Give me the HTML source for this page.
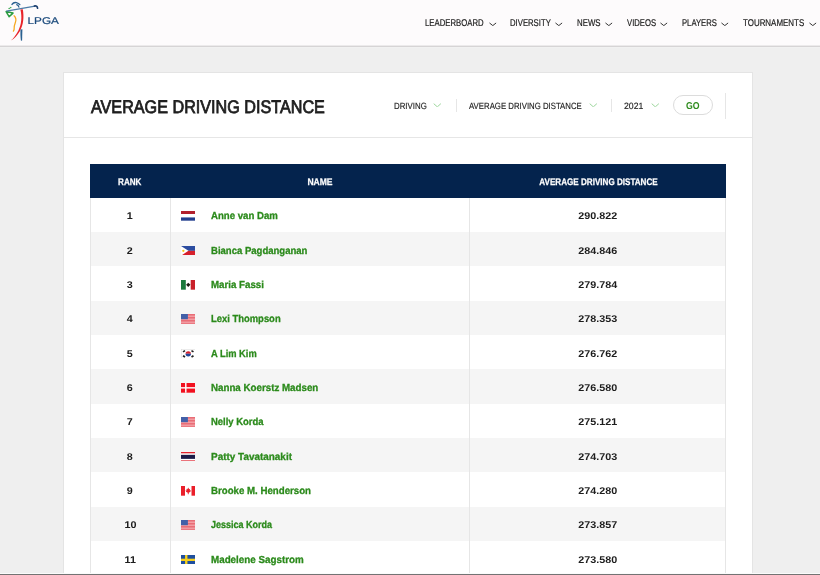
<!DOCTYPE html>
<html lang="en">
<head>
<meta charset="utf-8">
<title>Average Driving Distance | LPGA</title>
<style>
*{box-sizing:border-box;margin:0;padding:0}
html,body{width:820px;height:575px;overflow:hidden;background:#efefef;font-family:"Liberation Sans",sans-serif;color:#1d1d1d;text-rendering:geometricPrecision}
body{position:relative;will-change:transform}
.sx{display:inline-block;white-space:nowrap;transform-origin:0 50%;transform:scaleX(var(--s,1))}
/* header */
header{position:absolute;left:0;top:0;width:820px;height:47px;background:#fdfbfc;border-bottom:1px solid #d6d4d5;box-shadow:inset 0 -1px 0 #eceaeb,0 1px 0 #f1f1f1}
.logo{position:absolute;left:0;top:0;width:70px;height:48px}
nav a{position:absolute;top:18.3px;height:12px;line-height:12px;font-size:9.8px;color:#1c1c1c;-webkit-text-stroke:.2px #1c1c1c;text-decoration:none;white-space:nowrap}
nav svg{position:absolute;top:3.3px;width:7.6px;height:4.75px}
/* card */
.card{position:absolute;left:64px;top:73px;width:688px;height:520px;background:#fff;box-shadow:0 0 0 1px #e4e4e4}
.card h1{position:absolute;left:27px;top:22px;font-size:18.2px;line-height:24px;font-weight:400;color:#1f1f1f;-webkit-text-stroke:.8px #1f1f1f}
.hr{position:absolute;left:0;top:64px;width:688px;height:1px;background:#e6e6e6}
.filter{position:absolute;top:26.7px;height:12px;line-height:12px;font-size:9.1px;color:#1e1e1e;-webkit-text-stroke:.15px #1e1e1e;white-space:nowrap}
.filter svg{position:absolute;top:3.2px;width:8.6px;height:4.6px}
.vsep{position:absolute;width:1px;background:#e6e6e6}
.go{position:absolute;left:608.7px;top:21.6px;width:40px;height:20px;border:1px solid #dcdcdc;border-radius:10px;background:#fff;color:#2f8c1e;font:700 10px/21.4px "Liberation Sans",sans-serif;text-align:center}
.edge{position:absolute;left:0;top:573px;width:820px;height:2px;background:linear-gradient(#fbfbfb 0,#fbfbfb 50%,#737373 50%,#737373 100%)}
/* table */
.tbl{position:absolute;left:26px;top:91px;width:636px}
.th{position:relative;height:33.6px;background:#04234d;color:#fff;font-size:9.5px;font-weight:700}
.row{position:relative;height:34.33px;background:#fff;box-shadow:inset 1px 0 #e6e6e6,inset -1px 0 #e6e6e6}
.row:nth-child(odd){background:#f5f5f5}
.c{position:absolute;top:0;height:100%;display:flex;align-items:center;justify-content:center}
.c .sx{transform-origin:50% 50%}
.c1{left:0;width:80px}
.c2{left:80px;width:300px}
.c3{left:380px;width:256px}
.th .c{padding-top:3.2px;-webkit-text-stroke:.25px #fff}
.row .c2{justify-content:flex-start;border-left:1px solid #e6e6e6;border-right:1px solid #e6e6e6}
.row .c1,.row .c3{font-size:9.8px;font-weight:700;color:#1d1d1d;padding-top:5.4px;line-height:12px}
.row .c1 .sx,.row .c3 .sx{--s:1.1}
.row .c2 a{-webkit-text-stroke:.3px #2b8a1b;position:absolute;left:40.3px;margin-top:5px;line-height:12px;color:#2b8a1b;font-size:10.2px;font-weight:700;text-decoration:none}
.row .c2 a .sx{--s:.95;transform-origin:0 50%}
.flag{position:absolute;left:9.6px;top:50%;margin-top:-3.5px;width:14.5px;height:9.7px}
</style>
</head>
<body>
<header>
  <svg class="logo" viewBox="0 0 70 48">
    <path d="M12 4.4C13 2.9 14.8 2.2 16.4 2.6C17.9 3 19.1 3.7 19.8 4.6" fill="none" stroke="#2b6190" stroke-width="1.4" stroke-linecap="round"/>
    <path d="M16.7 4.6C17.8 5 18.6 5.9 18.9 7.1" fill="none" stroke="#2b6190" stroke-width="1.2" stroke-linecap="round"/>
    <path d="M8.6 8.8L11.3 7.3" fill="none" stroke="#2ea043" stroke-width="1.3" stroke-dasharray="1.3 .6"/>
    <path d="M6.1 11.6L13 13.1L9.1 16.7Z" fill="none" stroke="#2a9d3f" stroke-width="1.5" stroke-linejoin="round"/>
    <path d="M6.4 11.1L35 6.1" fill="none" stroke="#4d7ba6" stroke-width="1.15"/>
    <path d="M34.4 6.1C36 5.4 37.4 6.5 37.6 8.3" fill="none" stroke="#1d3f6e" stroke-width="1.6" stroke-linecap="round"/>
    <path d="M20.4 9.5L22.8 9.3C24.2 17 23.4 25 20 31C17.4 35.5 14.4 38.6 10.8 40.6C13.6 38 16.2 34.8 18.4 30.4C21.4 24.4 22.2 17 20.4 9.5Z" fill="#e8242a"/>
    <path d="M14.1 15.8C15.8 17.6 16.4 19.6 15.5 22C14.6 24.5 14 26 14.2 28C14.3 29.5 14 30.4 13.4 31.2" fill="none" stroke="#f6a81f" stroke-width="1.25" stroke-linecap="round"/>
    <path d="M20.5 29.6L22.4 29.3L22.1 40.8L20.9 40.6C20.4 37 20.3 33 20.5 29.6Z" fill="#2b6190"/>
    <text x="27.5" y="23.6" font-family="Liberation Sans, sans-serif" font-size="9.8" fill="#1b4a7c" stroke="#1b4a7c" stroke-width=".2" textLength="31.4" lengthAdjust="spacingAndGlyphs">LPGA</text>
  </svg>
  <nav>
    <a href="#" style="left:424.5px"><span class="sx" style="--s:0.792">LEADERBOARD</span><svg viewBox="0 0 8 5" style="left:64.5px"><path d="M.5 1L4 3.8L7.5 1" fill="none" stroke="#2a2a2a" stroke-width="1"/></svg></a>
    <a href="#" style="left:510px"><span class="sx" style="--s:0.789">DIVERSITY</span><svg viewBox="0 0 8 5" style="left:45.0px"><path d="M.5 1L4 3.8L7.5 1" fill="none" stroke="#2a2a2a" stroke-width="1"/></svg></a>
    <a href="#" style="left:577px"><span class="sx" style="--s:0.801">NEWS</span><svg viewBox="0 0 8 5" style="left:28.25px"><path d="M.5 1L4 3.8L7.5 1" fill="none" stroke="#2a2a2a" stroke-width="1"/></svg></a>
    <a href="#" style="left:626.5px"><span class="sx" style="--s:0.785">VIDEOS</span><svg viewBox="0 0 8 5" style="left:33.75px"><path d="M.5 1L4 3.8L7.5 1" fill="none" stroke="#2a2a2a" stroke-width="1"/></svg></a>
    <a href="#" style="left:682px"><span class="sx" style="--s:0.783">PLAYERS</span><svg viewBox="0 0 8 5" style="left:39.25px"><path d="M.5 1L4 3.8L7.5 1" fill="none" stroke="#2a2a2a" stroke-width="1"/></svg></a>
    <a href="#" style="left:743.2px"><span class="sx" style="--s:0.811">TOURNAMENTS</span><svg viewBox="0 0 8 5" style="left:65.8px"><path d="M.5 1L4 3.8L7.5 1" fill="none" stroke="#2a2a2a" stroke-width="1"/></svg></a>
  </nav>
</header>
<main class="card">
  <h1><span class="sx" style="--s:.889">AVERAGE DRIVING DISTANCE</span></h1>
  <div class="filter" style="left:329.7px"><span class="sx" style="--s:.865">DRIVING</span><svg viewBox="0 0 9 5" style="left:39.80000000000001px"><path d="M.6 .7L4.5 4.2L8.4 .7" fill="none" stroke="#93d293" stroke-width="1"/></svg></div>
  <div class="filter" style="left:404.7px"><span class="sx" style="--s:.857">AVERAGE DRIVING DISTANCE</span><svg viewBox="0 0 9 5" style="left:120.10000000000002px"><path d="M.6 .7L4.5 4.2L8.4 .7" fill="none" stroke="#93d293" stroke-width="1"/></svg></div>
  <div class="filter" style="left:560px"><span class="sx" style="--s:.954">2021</span><svg viewBox="0 0 9 5" style="left:27.200000000000045px"><path d="M.6 .7L4.5 4.2L8.4 .7" fill="none" stroke="#93d293" stroke-width="1"/></svg></div>
  <div class="vsep" style="left:392px;top:25.5px;height:13px"></div>
  <div class="vsep" style="left:547px;top:25.5px;height:13px"></div>
  <div class="vsep" style="left:661px;top:19.5px;height:26px"></div>
  <div class="go"><span class="sx" style="--s:.874;transform-origin:50% 50%">GO</span></div>
  <div class="hr"></div>
  <section class="tbl">
    <div class="th"><div class="c c1"><span class="sx" style="--s:.852">RANK</span></div><div class="c c2"><span class="sx" style="--s:.9">NAME</span></div><div class="c c3"><span class="sx" style="--s:.852">AVERAGE DRIVING DISTANCE</span></div></div>
    <div class="row"><div class="c c1"><span class="sx">1</span></div><div class="c c2"><svg class="flag" viewBox="0 0 16 11" preserveAspectRatio="none"><rect width="16" height="11" fill="#fff"/><rect width="16" height="3.4" fill="#b2202d"/><rect y="7.3" width="16" height="3.7" fill="#233f8e"/></svg><a href="#"><span class="sx" style="--s:0.944">Anne van Dam</span></a></div><div class="c c3"><span class="sx">290.822</span></div></div>
    <div class="row"><div class="c c1"><span class="sx">2</span></div><div class="c c2"><svg class="flag" viewBox="0 0 16 11" preserveAspectRatio="none"><rect width="16" height="5.5" fill="#2c4da0"/><rect y="5.5" width="16" height="5.5" fill="#d6202c"/><path d="M0 0L8.2 5.5L0 11Z" fill="#fff"/><circle cx="2.6" cy="5.5" r="1.3" fill="#f6c61c"/></svg><a href="#"><span class="sx" style="--s:0.936">Bianca Pagdanganan</span></a></div><div class="c c3"><span class="sx">284.846</span></div></div>
    <div class="row"><div class="c c1"><span class="sx">3</span></div><div class="c c2"><svg class="flag" viewBox="0 0 16 11" preserveAspectRatio="none"><rect width="16" height="11" fill="#fff"/><rect width="5.3" height="11" fill="#1b7a3d"/><rect x="10.7" width="5.3" height="11" fill="#c9202a"/><path d="M8 3L10.4 5.5L8 8L5.6 5.5Z" fill="#1e1e16"/></svg><a href="#"><span class="sx" style="--s:0.953">Maria Fassi</span></a></div><div class="c c3"><span class="sx">279.784</span></div></div>
    <div class="row"><div class="c c1"><span class="sx">4</span></div><div class="c c2"><svg class="flag" viewBox="0 0 16 11" preserveAspectRatio="none"><rect width="16" height="11" fill="#f7b9bd"/><g fill="#e5545f"><rect width="16" height=".85"/><rect y="1.7" width="16" height=".85"/><rect y="3.4" width="16" height=".85"/><rect y="5.1" width="16" height=".85"/><rect y="6.8" width="16" height=".85"/><rect y="8.5" width="16" height=".85"/><rect y="10.15" width="16" height=".85"/></g><rect width="7.6" height="5.9" fill="#4360a8"/></svg><a href="#"><span class="sx" style="--s:0.925">Lexi Thompson</span></a></div><div class="c c3"><span class="sx">278.353</span></div></div>
    <div class="row"><div class="c c1"><span class="sx">5</span></div><div class="c c2"><svg class="flag" viewBox="0 0 16 11" preserveAspectRatio="none"><rect width="16" height="11" fill="#fff" stroke="#cfcfcf" stroke-width=".9"/><path d="M5 5.5a3 3 0 0 1 6 0Z" fill="#d6202c"/><path d="M5 5.5a3 3 0 0 0 6 0Z" fill="#22489c"/><g fill="#222"><rect x="2" y="1.6" width="2.6" height="1.9" transform="rotate(-33 3.3 2.5)"/><rect x="11.4" y="1.6" width="2.6" height="1.9" transform="rotate(33 12.7 2.5)"/><rect x="2" y="7.5" width="2.6" height="1.9" transform="rotate(33 3.3 8.5)"/><rect x="11.4" y="7.5" width="2.6" height="1.9" transform="rotate(-33 12.7 8.5)"/></g></svg><a href="#"><span class="sx" style="--s:0.914">A Lim Kim</span></a></div><div class="c c3"><span class="sx">276.762</span></div></div>
    <div class="row"><div class="c c1"><span class="sx">6</span></div><div class="c c2"><svg class="flag" viewBox="0 0 16 11" preserveAspectRatio="none"><rect width="16" height="11" fill="#f2101f"/><rect x="4.5" width="1.6" height="11" fill="#fff"/><rect y="4.7" width="16" height="1.6" fill="#fff"/></svg><a href="#"><span class="sx" style="--s:0.957">Nanna Koerstz Madsen</span></a></div><div class="c c3"><span class="sx">276.580</span></div></div>
    <div class="row"><div class="c c1"><span class="sx">7</span></div><div class="c c2"><svg class="flag" viewBox="0 0 16 11" preserveAspectRatio="none"><rect width="16" height="11" fill="#f7b9bd"/><g fill="#e5545f"><rect width="16" height=".85"/><rect y="1.7" width="16" height=".85"/><rect y="3.4" width="16" height=".85"/><rect y="5.1" width="16" height=".85"/><rect y="6.8" width="16" height=".85"/><rect y="8.5" width="16" height=".85"/><rect y="10.15" width="16" height=".85"/></g><rect width="7.6" height="5.9" fill="#4360a8"/></svg><a href="#"><span class="sx" style="--s:0.929">Nelly Korda</span></a></div><div class="c c3"><span class="sx">275.121</span></div></div>
    <div class="row"><div class="c c1"><span class="sx">8</span></div><div class="c c2"><svg class="flag" viewBox="0 0 16 11" preserveAspectRatio="none"><rect width="16" height="11" fill="#fff"/><rect width="16" height="1.5" fill="#e0222e"/><rect y="9.5" width="16" height="1.5" fill="#e0222e"/><rect y="3.2" width="16" height="4.6" fill="#1b1b48"/></svg><a href="#"><span class="sx" style="--s:0.975">Patty Tavatanakit</span></a></div><div class="c c3"><span class="sx">274.703</span></div></div>
    <div class="row"><div class="c c1"><span class="sx">9</span></div><div class="c c2"><svg class="flag" viewBox="0 0 16 11" preserveAspectRatio="none"><rect width="16" height="11" fill="#fff"/><rect width="4.4" height="11" fill="#ea1f2a"/><rect x="11.6" width="4.4" height="11" fill="#ea1f2a"/><path d="M8 1.8L9 3.6L10 3.1L9.7 5.2L11 4.8L10.4 6.5L8.5 7.6L8.5 9.3L7.5 9.3L7.5 7.6L5.6 6.5L5 4.8L6.3 5.2L6 3.1L7 3.6Z" fill="#ea1f2a"/></svg><a href="#"><span class="sx" style="--s:0.95">Brooke M. Henderson</span></a></div><div class="c c3"><span class="sx">274.280</span></div></div>
    <div class="row"><div class="c c1"><span class="sx">10</span></div><div class="c c2"><svg class="flag" viewBox="0 0 16 11" preserveAspectRatio="none"><rect width="16" height="11" fill="#f7b9bd"/><g fill="#e5545f"><rect width="16" height=".85"/><rect y="1.7" width="16" height=".85"/><rect y="3.4" width="16" height=".85"/><rect y="5.1" width="16" height=".85"/><rect y="6.8" width="16" height=".85"/><rect y="8.5" width="16" height=".85"/><rect y="10.15" width="16" height=".85"/></g><rect width="7.6" height="5.9" fill="#4360a8"/></svg><a href="#"><span class="sx" style="--s:0.884">Jessica Korda</span></a></div><div class="c c3"><span class="sx">273.857</span></div></div>
    <div class="row"><div class="c c1"><span class="sx">11</span></div><div class="c c2"><svg class="flag" viewBox="0 0 16 11" preserveAspectRatio="none"><rect width="16" height="11" fill="#1e4f9f"/><rect x="4.5" width="2.6" height="11" fill="#f6d01e"/><rect y="4.2" width="16" height="2.6" fill="#f6d01e"/></svg><a href="#"><span class="sx" style="--s:0.963">Madelene Sagstrom</span></a></div><div class="c c3"><span class="sx">273.580</span></div></div>
  </section>
</main>
<div class="edge"></div>
</body>
</html>
